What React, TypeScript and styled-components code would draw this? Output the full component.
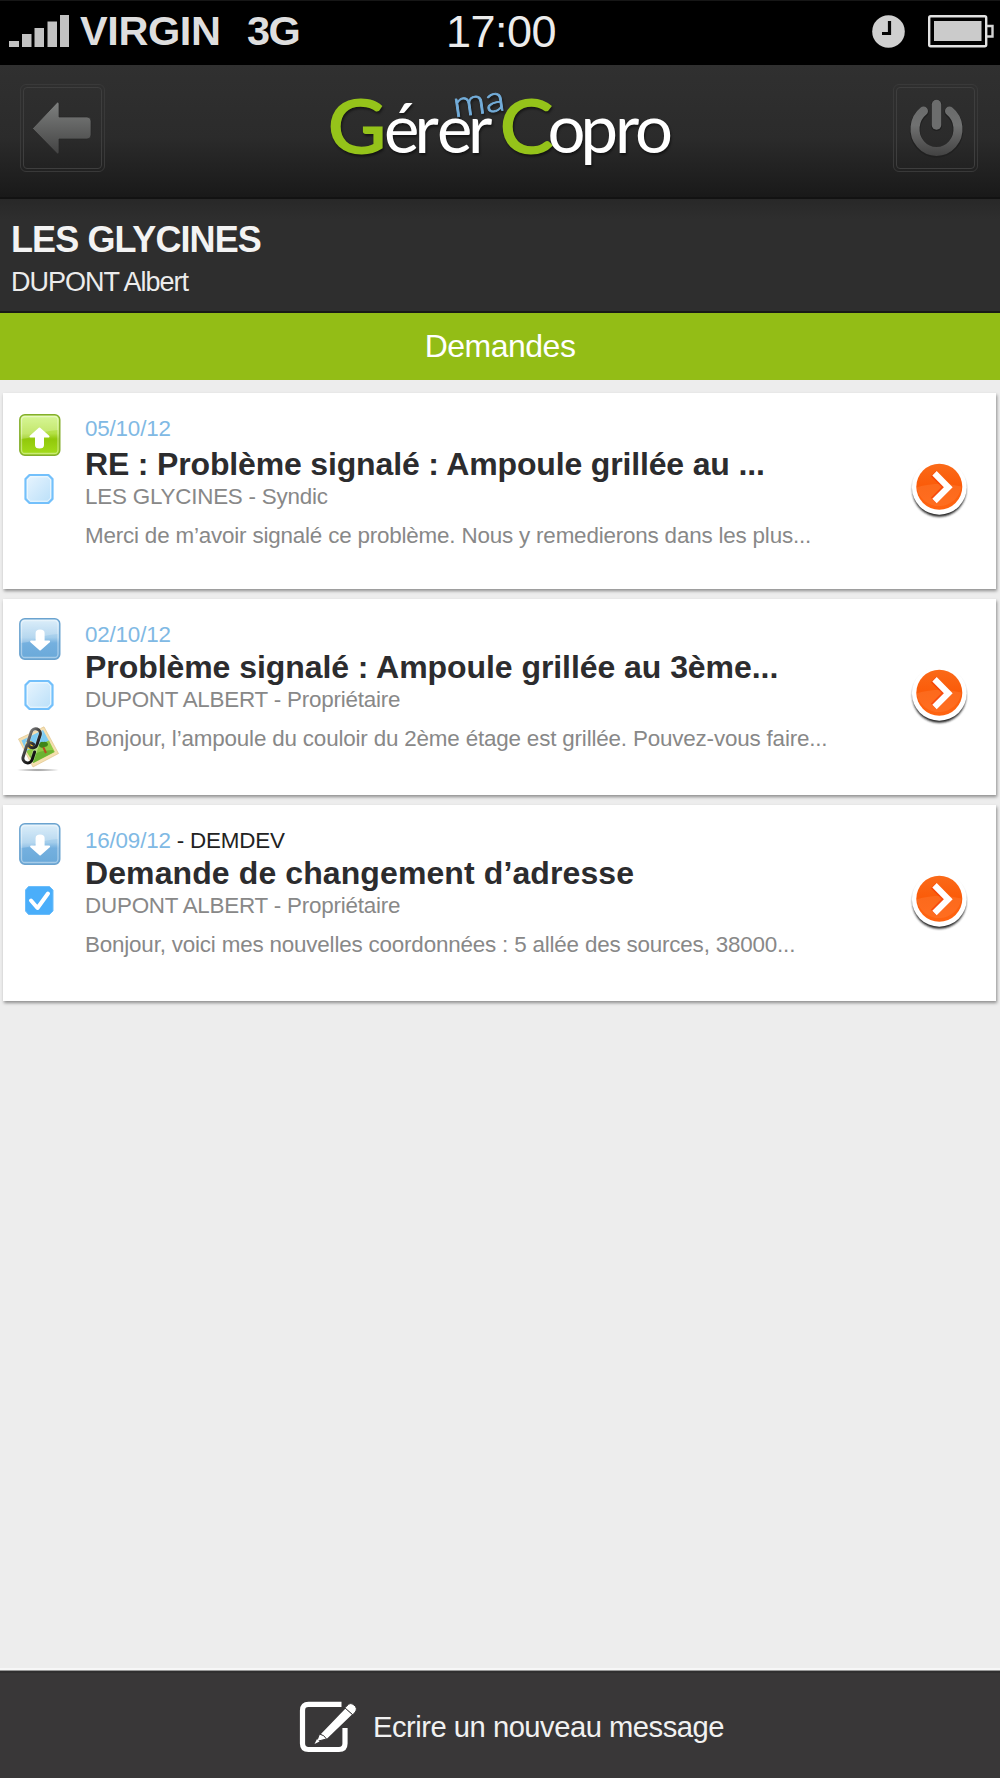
import React from "react";
import styled, { createGlobalStyle } from "styled-components";

const GlobalStyle = createGlobalStyle`
  *, *::before, *::after { box-sizing: border-box; }
  body { margin: 0; background: #ededed; font-family: "Liberation Sans", Arial, sans-serif; }
  svg { display: block; flex: none; overflow: visible; }
`;

const Screen = styled.div`
  width: 1000px;
  height: 1778px;
  display: flex;
  flex-direction: column;
  background: #ededed;
  overflow: hidden;
`;

interface LineProps {
  $size: number;
  $height: number;
  $track?: number;
  $color?: string;
  $bold?: boolean;
}

const Line = styled.div<LineProps>`
  font-size: ${(p) => p.$size}px;
  line-height: ${(p) => p.$height}px;
  height: ${(p) => p.$height}px;
  letter-spacing: ${(p) => p.$track ?? 0}px;
  color: ${(p) => p.$color ?? "#fff"};
  font-weight: ${(p) => (p.$bold ? 700 : 400)};
  white-space: nowrap;
`;

const StatusBar = styled.div`
  height: 65px;
  flex: none;
  display: grid;
  grid-template-columns: 446px 1fr 127px;
  background: #000;
  border-top: 1px solid #161616;
`;

const Carrier = styled.div`
  display: flex;
  align-items: flex-start;
  padding: 5px 0 0 9px;
`;

const CarrierName = styled(Line)`
  width: 167px;
  margin-left: 11px;
`;

const Clock = styled.div`
  padding-top: 6px;
`;

const Indicators = styled.div`
  display: flex;
  gap: 23px;
  padding-top: 14px;
  align-items: flex-start;
  margin-left: -1px;
`;

const Header = styled.header`
  height: 134px;
  flex: none;
  display: flex;
  justify-content: space-between;
  align-items: flex-start;
  padding: 19px 22px 0 20px;
  background: linear-gradient(#303030, #2b2b2b 55%, #1c1c1c 93%, #191919);
  border-bottom: 2px solid #121212;
`;

const HeaderButton = styled.button`
  width: 85px;
  height: 88px;
  padding: 2px;
  border: 1px solid #393939;
  border-radius: 6px;
  background: transparent;
`;

const HeaderButtonFace = styled.span`
  display: flex;
  align-items: center;
  justify-content: center;
  width: 100%;
  height: 100%;
  border: 1px solid #3e3e3e;
  border-radius: 4px;
`;

const Residence = styled.section`
  height: 114px;
  flex: none;
  padding: 19px 0 0 11px;
  background: linear-gradient(#282828, #2e2e2e 18%, #2e2e2e);
  border-bottom: 2px solid #191a16;
`;

const TabTitle = styled.h1`
  height: 67px;
  flex: none;
  margin: 0;
  display: flex;
  justify-content: center;
  padding-top: 15px;
  background: #93bd16;
`;

const List = styled.main`
  flex: 1;
  display: flex;
  flex-direction: column;
  gap: 10px;
  padding: 12.6px 4px 0 3px;
`;

const Card = styled.article`
  height: 196px;
  flex: none;
  display: grid;
  grid-template-columns: 82px 1fr 85px;
  background: #fff;
  box-shadow: 1px 2px 3px rgba(0, 0, 0, 0.4);
`;

const IconColumn = styled.div<{ $top: number }>`
  display: flex;
  flex-direction: column;
  align-items: flex-start;
  padding: ${(p) => p.$top}px 0 0 13px;
`;

const TileSlot = styled.div`
  margin-left: 3px;
`;

const CheckSlot = styled.div<{ $gap: number }>`
  margin: ${(p) => p.$gap}px 0 16px 9px;
`;

const Body = styled.div`
  padding-top: 24px;
`;

const DateTag = styled.span`
  color: #80b9e4;
`;

const Subject = styled(Line)<{ $gap: number }>`
  margin: ${(p) => p.$gap}px 0 3px;
`;

const Excerpt = styled(Line)`
  margin-top: 15px;
`;

const OpenButton = styled.button`
  width: 56px;
  height: 60px;
  margin-top: 67px;
  padding: 0;
  border: 0;
  background: transparent;
`;

const Footer = styled.footer`
  height: 107px;
  flex: none;
  display: flex;
  align-items: flex-start;
  gap: 16px;
  padding: 28px 0 0 298px;
  background: #393738;
  border-top: 2px solid #302f30;
  box-shadow: 0 -1px 0 #999, 0 -3px 0 #f7f7f7;
`;

const FooterLabel = styled(Line)`
  padding-top: 8px;
`;

const SignalIcon = () => (
  <svg width="60" height="42" fill="#c2c2c2">
    <path d="M0 35h10v6H0zM13 28h9.5v13H13zM25.5 22H35v19h-9.5zM38.500 15.500H48V41h-9.500zM51 9h9v32h-9z" />
  </svg>
);

const AlarmIcon = () => (
  <svg width="33" height="34">
    <circle cx="16.500" cy="16.500" r="16.300" fill="#cfcfcf" />
    <path d="M17.500 6v12.500H10" fill="none" stroke="#050505" strokeWidth="3.200" />
  </svg>
);

const BatteryIcon = () => (
  <svg width="67" height="34">
    <rect x="1.200" y="1.200" width="57" height="30" rx="1.500" fill="none" stroke="#e2e2e2" strokeWidth="2.400" />
    <rect x="6" y="6" width="47.500" height="20" fill="#cbcbcb" />
    <path d="M59 11h5.500v10.500H59" fill="none" stroke="#d4d4d4" strokeWidth="2.400" />
  </svg>
);

const BackIcon = () => (
  <svg width="60" height="54" viewBox="1 0 60 54">
    <defs>
      <linearGradient id="metalArrow" x2="0" y2="1">
        <stop stopColor="#7e807f" />
        <stop offset="1" stopColor="#434343" />
      </linearGradient>
    </defs>
    <path d="M.5 27.500 25.500 1l1.500 1v14h28q4 0 4 4v14q0 4-4 4H27v14l-1.500 1z" fill="url(#metalArrow)" stroke="#252525" strokeWidth=".7" />
  </svg>
);

const PowerIcon = () => (
  <svg width="54" height="60" viewBox="-.5 0 54 60">
    <defs>
      <linearGradient id="metalRing" gradientUnits="userSpaceOnUse" x1="0" y1="2" x2="0" y2="58">
        <stop stopColor="#686969" />
        <stop offset=".45" stopColor="#707171" />
        <stop offset="1" stopColor="#424242" />
      </linearGradient>
    </defs>
    <g fill="none" strokeLinecap="round">
      <path d="M14 14a21.500 22.500 0 1 0 26 0" stroke="#202020" strokeWidth="10.500" />
      <path d="M14 13a21.500 22.500 0 1 0 26 0" stroke="url(#metalRing)" strokeWidth="9" />
      <path d="M27 7v20.500" stroke="#202020" strokeWidth="11" />
      <path d="M27 6.500V27" stroke="#6c6d6d" strokeWidth="9.500" />
    </g>
  </svg>
);

const LogoSvg = styled.svg`
  margin: 0 0 0 6px;
  font-family: Lato, "Liberation Sans", sans-serif;
  filter: drop-shadow(1px 2px 1px rgba(0, 0, 0, 0.5));
`;

const Logo = () => (
  <LogoSvg width="344" height="90" viewBox="328 84 344 90">
    <text x="326" y="153" fontSize="73" fill="#95c31a" stroke="#95c31a" strokeWidth="2" textLength="58" lengthAdjust="spacingAndGlyphs">G</text>
    <text x="382 412.500 435 466" y="153" fontSize="67" fill="#fff">érer</text>
    <text x="452.500" y="117" fontSize="36" fill="#74aedb" fontWeight="300" stroke="#74aedb" strokeWidth=".8" textLength="52" lengthAdjust="spacingAndGlyphs" transform="rotate(-8 454 116.500)">ma</text>
    <text x="498" y="153" fontSize="73" fill="#95c31a" stroke="#95c31a" strokeWidth="2" textLength="53" lengthAdjust="spacingAndGlyphs">C</text>
    <text x="545.500 578.500 613 633" y="153" fontSize="67" fill="#fff">opro</text>
  </LogoSvg>
);

const DirectionIcon = ({ up }: { up: boolean }) => {
  const id = up ? "tileUp" : "tileDown";
  const shades = up ? ["#cdf57c", "#b3e044", "#91c80a", "#a5de1c"] : ["#d3eaf9", "#a3cdeb", "#74b0df", "#6aa9d9"];
  const edge = up ? "#83ae2c" : "#6ba3cf";
  return (
    <svg width="42" height="42" viewBox="0 0 42 42">
      <defs>
        <linearGradient id={id} x2="0" y2="1">
          <stop stopColor={shades[0]} />
          <stop offset=".46" stopColor={shades[1]} />
          <stop offset=".6" stopColor={shades[2]} />
          <stop offset="1" stopColor={shades[3]} />
        </linearGradient>
      </defs>
      <rect x=".8" y=".8" width="40" height="40.400" rx="5" fill={`url(#${id})`} stroke={edge} strokeWidth="1.400" />
      <path d="M2 5q0-3 3-3h31q3 0 3 3v11Q24 17 15 22 8 25 2 25z" fill="#fff" opacity=".22" />
      <rect x="2.500" y="2.500" width="36.500" height="37" rx="3.500" fill="none" stroke="#fff" strokeOpacity=".4" strokeWidth="1.300" />
      <path
        d="M20.500 14.500 29.500 22.500H24V31q0 2.500-3.500 2.500T17 31v-8.500h-5.500z"
        fill="#fff"
        stroke="#fff"
        strokeWidth="2"
        strokeLinejoin="round"
        transform={up ? undefined : "rotate(180 20.800 23)"}
      />
    </svg>
  );
};

const CheckIcon = ({ checked }: { checked: boolean }) => (
  <svg width="29" height="30" viewBox="0 0 29 30">
    <defs>
      <linearGradient id="boxFill" x2="1" y2="1">
        <stop stopColor="#e9f5fe" />
        <stop offset="1" stopColor="#b9dff9" />
      </linearGradient>
    </defs>
    {checked ? (
      <>
        <path d="M3.500 .5h21l3.500 3.500v21l-3.500 3.500h-21L.5 25V4z" fill="#4aaefa" stroke="#6bbdfb" strokeWidth="1" strokeLinejoin="round" />
        <path d="M6 14.500l6.500 7.500L23 7.500" fill="none" stroke="#fff" strokeWidth="4" strokeLinecap="round" strokeLinejoin="round" />
      </>
    ) : (
      <>
        <path d="M4.500 1h19l4 4v20l-4 4h-19l-4-4V5z" fill="url(#boxFill)" stroke="#73c0fb" strokeWidth="2.200" strokeLinejoin="round" />
        <path d="M5.500 2.800h17l3.200 3.200v18l-3.200 3.200h-17L2.300 24V6z" fill="none" stroke="#f2faff" strokeWidth=".9" />
      </>
    )}
  </svg>
);

const AttachmentIcon = () => (
  <svg width="44" height="46" viewBox="0 0 44 46">
    <defs>
      <radialGradient id="ground">
        <stop stopColor="#888" />
        <stop offset="1" stopColor="#888" stopOpacity="0" />
      </radialGradient>
      <linearGradient id="chrome" x2="1" y2="1">
        <stop stopColor="#777" />
        <stop offset=".5" stopColor="#333" />
        <stop offset="1" stopColor="#080808" />
      </linearGradient>
    </defs>
    <ellipse cx="22" cy="44" rx="22" ry="1.600" fill="url(#ground)" />
    <path d="M2.500 13 28 .8 42.500 27.500 17 41z" fill="#f5dfb0" stroke="#dcc083" strokeWidth=".6" />
    <path d="M5.500 14.500 27 4 33 15 11 27z" fill="#7dccf3" />
    <path d="M10 25 33 14.500 38.800 26 17.500 37z" fill="#8fcb45" />
    <path d="M14 30q10-6 23-6l1 2-21 11z" fill="#6bb332" />
    <circle cx="13.500" cy="19" r="4" fill="#ffc928" />
    <path d="M27 20.500 30 27" stroke="#b84d21" strokeWidth="2" />
    <path d="M23 18q2-3 4-2 4-1 5 2 0 3-4 3-3 2-5-1z" fill="#3f8619" />
    <g fill="none" strokeLinecap="round" strokeLinejoin="round" transform="rotate(18 16 21)">
      <rect x="10.500" y="2" width="9.500" height="36" rx="4.700" stroke="#fff" strokeOpacity=".35" strokeWidth="4.200" />
      <path d="M20 14V7a4.700 4.700 0 0 0-9.400 0V17M20 25v8a4.700 4.700 0 0 1-9.400 0V21a4 4 0 0 1 6-3M20 12v5a4.500 4.500 0 0 1-7 4" stroke="url(#chrome)" strokeWidth="3" />
    </g>
  </svg>
);

const OpenIcon = () => (
  <svg width="56" height="60" viewBox="0 0 56 60">
    <defs>
      <filter id="soften" x="-20%" y="-20%" width="140%" height="140%">
        <feGaussianBlur stdDeviation="1.200" />
      </filter>
      <linearGradient id="orange" x2="0" y2="1">
        <stop stopColor="#fa6a19" />
        <stop offset=".45" stopColor="#fb5c0a" />
        <stop offset="1" stopColor="#ff6411" />
      </linearGradient>
    </defs>
    <circle cx="28.300" cy="30" r="26.800" fill="#222" filter="url(#soften)" />
    <circle cx="28.300" cy="27.300" r="27.400" fill="#fff" />
    <circle cx="28.300" cy="26.800" r="23" fill="url(#orange)" />
    <path d="M5.500 27.500q22-7 45-1A22.800 22.800 0 0 1 6 29.500z" fill="#ff8340" opacity=".35" />
    <path d="M22.500 13.500 36 27 22.500 40.500" fill="none" stroke="#f22b00" strokeOpacity=".5" strokeWidth="7.500" />
    <path d="M23.500 13.300 37.300 27.200 23.500 41" fill="none" stroke="#fff" strokeWidth="6.200" />
  </svg>
);

const ComposeIcon = () => (
  <svg width="59" height="52" viewBox="-1 0 59 52">
    <path d="M42.500 3.300H9.500Q3.500 3.300 3.500 9.500v33q0 6 6 6H40q6 0 6-6V27" fill="none" stroke="#fff" strokeWidth="5.200" />
    <path d="M20.500 33 46.500 6l8 7.500-27 26z" fill="#fff" stroke="#393738" strokeWidth="2" />
    <path d="M48 4.800Q51 .8 55 4t1.300 7l-2.500 2.800-8-7z" fill="#fff" stroke="#393738" strokeWidth="1" />
    <path d="M20.500 33q-1.500 4-3 7.500l10-2.500q-2-4-7-5z" fill="#fff" stroke="#393738" strokeWidth="1" />
    <path d="m18 38-2.500 5 5-2.500z" fill="#fff" />
  </svg>
);

interface Message {
  date: string;
  tag?: string;
  subject: string;
  subjectTrack: number;
  subjectGap: number;
  sender: string;
  excerpt: string;
  excerptTrack: number;
  up: boolean;
  checked: boolean;
  attachment: boolean;
  iconTop: number;
}

const messages: Message[] = [
  {
    date: "05/10/12",
    subject: "RE : Problème signalé : Ampoule grillée au ...", subjectTrack: -0.16, subjectGap: 5,
    sender: "LES GLYCINES - Syndic",
    excerpt: "Merci de m’avoir signalé ce problème. Nous y remedierons dans les plus...", excerptTrack: -0.18,
    up: true, checked: false, attachment: false, iconTop: 21,
  },
  {
    date: "02/10/12",
    subject: "Problème signalé : Ampoule grillée au 3ème...", subjectTrack: -0.06, subjectGap: 2,
    sender: "DUPONT ALBERT - Propriétaire",
    excerpt: "Bonjour, l’ampoule du couloir du 2ème étage est grillée. Pouvez-vous faire...", excerptTrack: -0.17,
    up: false, checked: false, attachment: true, iconTop: 19,
  },
  {
    date: "16/09/12", tag: " - DEMDEV",
    subject: "Demande de changement d’adresse", subjectTrack: 0.1, subjectGap: 2,
    sender: "DUPONT ALBERT - Propriétaire",
    excerpt: "Bonjour, voici mes nouvelles coordonnées : 5 allée des sources, 38000...", excerptTrack: -0.18,
    up: false, checked: true, attachment: false, iconTop: 18,
  },
];

const MessageCard = ({ m }: { m: Message }) => (
  <Card>
    <IconColumn $top={m.iconTop}>
      <TileSlot>
        <DirectionIcon up={m.up} />
      </TileSlot>
      <CheckSlot $gap={39 - m.iconTop}>
        <CheckIcon checked={m.checked} />
      </CheckSlot>
      {m.attachment && <AttachmentIcon />}
    </IconColumn>
    <Body>
      <Line $size={22.400} $height={24} $track={-0.180} $color="#222">
        <DateTag>{m.date}</DateTag>
        {m.tag}
      </Line>
      <Subject as="h2" $size={32} $height={36} $track={m.subjectTrack} $color="#2c2c2e" $bold $gap={m.subjectGap}>
        {m.subject}
      </Subject>
      <Line $size={22.400} $height={24} $track={-0.210} $color="#888">{m.sender}</Line>
      <Excerpt $size={22.400} $height={24} $track={m.excerptTrack} $color="#888">{m.excerpt}</Excerpt>
    </Body>
    <OpenButton aria-label="Ouvrir">
      <OpenIcon />
    </OpenButton>
  </Card>
);

export default function App() {
  return (
    <>
      <GlobalStyle />
      <Screen>
        <StatusBar>
          <Carrier>
            <SignalIcon />
            <CarrierName $size={41.500} $height={50} $track={-0.4} $color="#dedede" $bold>VIRGIN</CarrierName>
            <Line $size={41.500} $height={50} $track={-1.500} $color="#dedede" $bold>3G</Line>
          </Carrier>
          <Clock>
            <Line $size={45} $height={50} $track={-0.500} $color="#ececec">17:00</Line>
          </Clock>
          <Indicators>
            <AlarmIcon />
            <BatteryIcon />
          </Indicators>
        </StatusBar>
        <Header>
          <HeaderButton aria-label="Retour">
            <HeaderButtonFace><BackIcon /></HeaderButtonFace>
          </HeaderButton>
          <Logo />
          <HeaderButton aria-label="Quitter">
            <HeaderButtonFace><PowerIcon /></HeaderButtonFace>
          </HeaderButton>
        </Header>
        <Residence>
          <Line $size={36} $height={44} $track={-0.900} $color="#f3f3f3" $bold>LES GLYCINES</Line>
          <Line $size={27} $height={40} $track={-1} $color="#ececec">DUPONT Albert</Line>
        </Residence>
        <TabTitle>
          <Line as="span" $size={32} $height={36} $track={-0.500}>Demandes</Line>
        </TabTitle>
        <List>
          {messages.map((m) => <MessageCard key={m.date} m={m} />)}
        </List>
        <Footer>
          <ComposeIcon />
          <FooterLabel $size={29.200} $height={36} $track={-0.500} $color="#f1f1f1">Ecrire un nouveau message</FooterLabel>
        </Footer>
      </Screen>
    </>
  );
}
